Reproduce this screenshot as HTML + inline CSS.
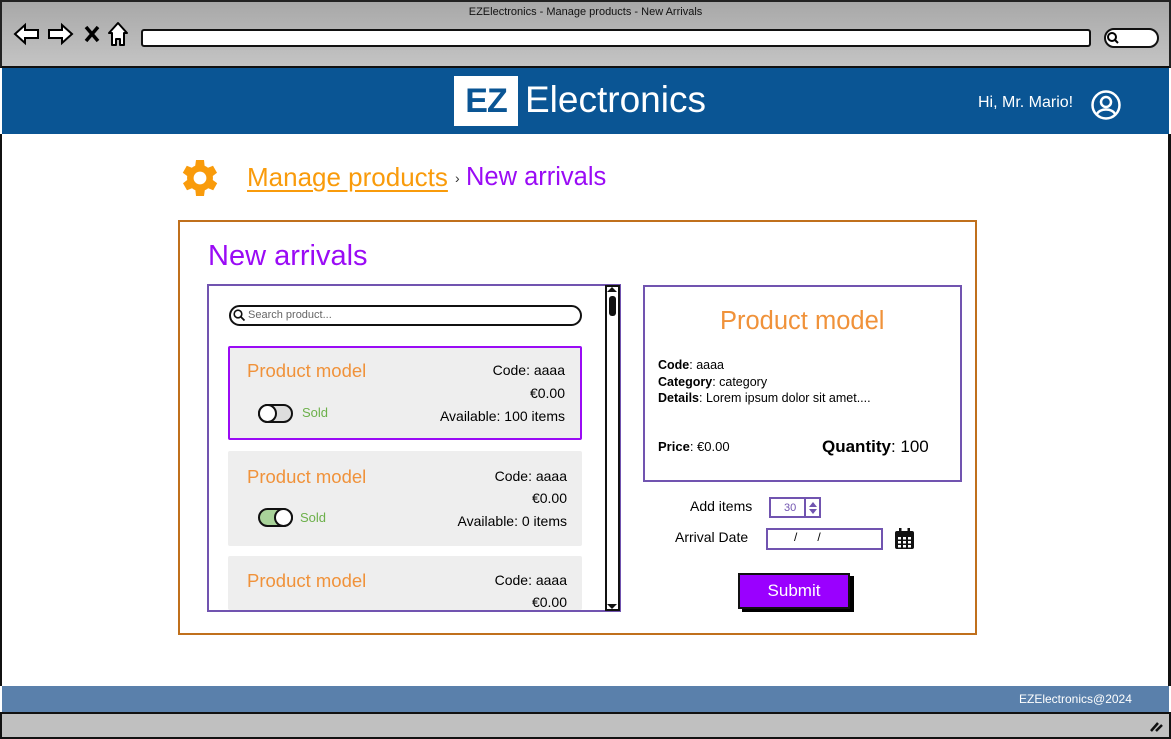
<!DOCTYPE html>
<html><head><meta charset="utf-8"><style>
*{margin:0;padding:0;box-sizing:border-box}
body{width:1171px;height:739px;position:relative;overflow:hidden;background:#fff;font-family:"Liberation Sans",sans-serif;color:#000}
.a{position:absolute}
.card{position:absolute;left:228px;width:354px;background:#eee;border-radius:2px}
.pm{position:absolute;left:18px;top:14px;font-size:18.5px;color:#f0923a}
.r{position:absolute;right:15px;font-size:14px;text-align:right}
.sold{position:absolute;left:72px;font-size:13px;color:#6cb04a}
</style></head><body>
<!-- browser chrome -->
<div class="a" style="left:0;top:0;width:1171px;height:68px;background:linear-gradient(#a8a8a8,#c4c4c4);border:2px solid #222;border-bottom:2px solid #111"></div>
<div class="a" style="left:0;top:6px;width:1171px;text-align:center;font-size:11px;color:#111">EZElectronics - Manage products - New Arrivals</div>
<svg class="a" style="left:12px;top:20px" width="120" height="28" viewBox="0 0 120 28">
<path d="M3 14 L13 5 V10 H26 V18 H13 V23 Z" fill="#fff" stroke="#000" stroke-width="2"/>
<path d="M46 14 L36 5 V10 H23 V18 H36 V23 Z" fill="#fff" stroke="#000" stroke-width="2" transform="translate(14 0)"/>
<path d="M74 7 L86 21 M86 7 L74 21" stroke="#000" stroke-width="3.5"/>
<path d="M106 3 L97 13 H100 V25 H104 V19 H108 V25 H112 V13 H115 Z" fill="#fff" stroke="#000" stroke-width="2" stroke-linejoin="round"/>
</svg>
<div class="a" style="left:141px;top:29px;width:950px;height:18px;background:#fff;border:2px solid #111;border-radius:3px"></div>
<div class="a" style="left:1104px;top:28px;width:55px;height:20px;background:#fff;border:2px solid #111;border-radius:10px"></div>
<svg class="a" style="left:1106px;top:31px" width="14" height="14"><circle cx="6" cy="6" r="4" fill="none" stroke="#000" stroke-width="2"/><path d="M9 9 L12 12" stroke="#000" stroke-width="2"/></svg>
<!-- header -->
<div class="a" style="left:2px;top:68px;width:1167px;height:66px;background:#0a5594"></div>
<div class="a" style="left:454px;top:76px;width:64px;height:50px;background:#fff;color:#0a5594;font-weight:bold;font-size:34px;text-align:center;line-height:50px;letter-spacing:-1px">EZ</div>
<div class="a" style="left:525px;top:79px;font-size:37px;color:#fff">Electronics</div>
<div class="a" style="left:978px;top:94px;font-size:16px;color:#fff">Hi, Mr. Mario!</div>
<svg class="a" style="left:1090px;top:89px" width="32" height="32" viewBox="0 0 32 32"><circle cx="16" cy="16" r="13.5" fill="none" stroke="#fff" stroke-width="2.5"/><circle cx="16" cy="13" r="5" fill="none" stroke="#fff" stroke-width="2.5"/><path d="M7 25 C10 19 22 19 25 25" fill="none" stroke="#fff" stroke-width="2.5"/></svg>
<!-- body border -->
<div class="a" style="left:0;top:134px;width:2px;height:552px;background:#111"></div>
<div class="a" style="left:1168px;top:134px;width:3px;height:552px;background:#111"></div>
<!-- breadcrumb -->
<svg class="a" style="left:175px;top:154px" width="50" height="48" viewBox="0 0 24 24"><path fill="#f99b0b" d="M19.4 13a7.5 7.5 0 0 0 0-2l2.1-1.6-2-3.5-2.5 1a7.3 7.3 0 0 0-1.7-1L15 3h-4l-.4 2.9a7.3 7.3 0 0 0-1.7 1l-2.5-1-2 3.5L6.6 11a7.5 7.5 0 0 0 0 2l-2.1 1.6 2 3.5 2.5-1a7.3 7.3 0 0 0 1.7 1L11 21h4l.4-2.9a7.3 7.3 0 0 0 1.7-1l2.5 1 2-3.5zM13 15.2a3.2 3.2 0 1 1 0-6.4 3.2 3.2 0 0 1 0 6.4z" transform="translate(-1 0)"/></svg>
<div class="a" style="left:247px;top:162px;font-size:26px;color:#f99b0b;text-decoration:underline;text-underline-offset:4px">Manage products</div>
<div class="a" style="left:455px;top:170px;font-size:14px;color:#333">›</div>
<div class="a" style="left:466px;top:163px;font-size:25.5px;color:#9a0bf5">New arrivals</div>
<!-- main box -->
<div class="a" style="left:178px;top:220px;width:799px;height:415px;border:2px solid #c0701c"></div>
<div class="a" style="left:208px;top:240px;font-size:29px;color:#9a0bf5">New arrivals</div>
<!-- list -->
<div class="a" style="left:207px;top:284px;width:414px;height:328px;border:2px solid #7154b0;overflow:hidden"></div>
<div class="a" style="left:605px;top:285px;width:15px;height:326px;border:2px solid #111;background:#fff"></div>
<div class="a" style="left:609px;top:296px;width:7px;height:20px;background:#111;border-radius:3px"></div>
<div class="a" style="left:607px;top:287px;width:0;height:0;border:5px solid transparent;border-bottom-color:#111;border-top:0"></div>
<div class="a" style="left:607px;top:604px;width:0;height:0;border:5px solid transparent;border-top-color:#111;border-bottom:0"></div>
<div class="a" style="left:229px;top:305px;width:353px;height:21px;border:2px solid #111;border-radius:11px"></div>
<svg class="a" style="left:233px;top:309px" width="13" height="13"><circle cx="5" cy="5" r="3.8" fill="none" stroke="#111" stroke-width="1.6"/><path d="M8 8 L11.5 11.5" stroke="#111" stroke-width="1.8"/></svg>
<div class="a" style="left:248px;top:309px;font-size:11px;color:#666">Search product...</div>

<div class="card" style="top:346px;height:94px;border:2px solid #9a0bf5">
<div class="pm" style="left:17px;top:12px">Product model</div>
<div class="r" style="top:14px">Code: aaaa</div>
<div class="r" style="top:37px">€0.00</div>
<div class="r" style="top:60px">Available: 100 items</div>
<div class="a" style="left:28px;top:56px;width:35px;height:19px;border:2px solid #111;border-radius:10px;background:#ddd"></div>
<div class="a" style="left:28px;top:56px;width:19px;height:19px;border:2px solid #111;border-radius:50%;background:#fff"></div>
<div class="sold" style="top:57px">Sold</div>
</div>
<div class="card" style="top:451px;height:95px">
<div class="pm" style="left:19px;top:15px">Product model</div>
<div class="r" style="top:17px">Code: aaaa</div>
<div class="r" style="top:39px">€0.00</div>
<div class="r" style="top:62px">Available: 0 items</div>
<div class="a" style="left:30px;top:57px;width:35px;height:19px;border:2px solid #111;border-radius:10px;background:#a9d39a"></div>
<div class="a" style="left:46px;top:57px;width:19px;height:19px;border:2px solid #111;border-radius:50%;background:#fff"></div>
<div class="sold" style="top:59px">Sold</div>
</div>
<div class="card" style="top:556px;height:54px">
<div class="pm" style="left:19px;top:14px">Product model</div>
<div class="r" style="top:16px">Code: aaaa</div>
<div class="r" style="top:38px">€0.00</div>
</div>
<!-- detail -->
<div class="a" style="left:643px;top:285px;width:319px;height:197px;border:2px solid #7154b0"></div>
<div class="a" style="left:720px;top:307px;font-size:25.5px;color:#f0923a">Product model</div>
<div class="a" style="left:658px;top:357px;font-size:12.5px;line-height:16.5px"><b>Code</b>: aaaa<br><b>Category</b>: category<br><b>Details</b>: Lorem ipsum dolor sit amet....</div>
<div class="a" style="left:658px;top:439px;font-size:13px"><b>Price</b>: €0.00</div>
<div class="a" style="left:822px;top:437px;font-size:17px"><b>Quantity</b>: 100</div>
<!-- form -->
<div class="a" style="left:690px;top:498px;font-size:14px">Add items</div>
<div class="a" style="left:769px;top:497px;width:52px;height:21px;border:2px solid #7154b0"></div>
<div class="a" style="left:784px;top:502px;font-size:11px;color:#7154b0">30</div>
<div class="a" style="left:804px;top:497px;width:2px;height:21px;background:#7154b0"></div>
<svg class="a" style="left:807px;top:500px" width="12" height="16"><path d="M2 7 L6 2 L10 7Z M2 9 L6 14 L10 9Z" fill="#7154b0"/></svg>
<div class="a" style="left:675px;top:529px;font-size:14px">Arrival Date</div>
<div class="a" style="left:766px;top:528px;width:117px;height:22px;border:2px solid #7154b0"></div>
<div class="a" style="left:794px;top:530px;font-size:12px">/&nbsp;&nbsp;&nbsp;&nbsp;&nbsp;&nbsp;/</div>
<svg class="a" style="left:894px;top:527px" width="21" height="23" viewBox="0 0 21 23"><rect x="1" y="4" width="19" height="18" rx="2" fill="#111"/><rect x="5" y="1" width="2.5" height="5" fill="#111"/><rect x="13.5" y="1" width="2.5" height="5" fill="#111"/><g fill="#fff"><rect x="4" y="10" width="3" height="2.5"/><rect x="9" y="10" width="3" height="2.5"/><rect x="14" y="10" width="3" height="2.5"/><rect x="4" y="14" width="3" height="2.5"/><rect x="9" y="14" width="3" height="2.5"/><rect x="14" y="14" width="3" height="2.5"/><rect x="4" y="18" width="3" height="2.5"/><rect x="9" y="18" width="3" height="2.5"/><rect x="14" y="18" width="3" height="2.5"/></g></svg>
<div class="a" style="left:742px;top:576px;width:112px;height:36px;background:#000"></div>
<div class="a" style="left:738px;top:573px;width:112px;height:36px;background:#9a00ff;border:2px solid #111;color:#fff;font-size:17px;text-align:center;line-height:32px">Submit</div>
<!-- footer -->
<div class="a" style="left:2px;top:686px;width:1167px;height:27px;background:#5a80ab"></div>
<div class="a" style="left:1019px;top:692px;font-size:12px;color:#fff">EZElectronics@2024</div>
<div class="a" style="left:0;top:712px;width:1171px;height:27px;background:#c0c0c0;border:2px solid #111"></div>
<svg class="a" style="left:1148px;top:719px" width="16" height="14"><path d="M3 12 L10 4 M8 12 L14 6" stroke="#111" stroke-width="2.5"/></svg>
</body></html>
